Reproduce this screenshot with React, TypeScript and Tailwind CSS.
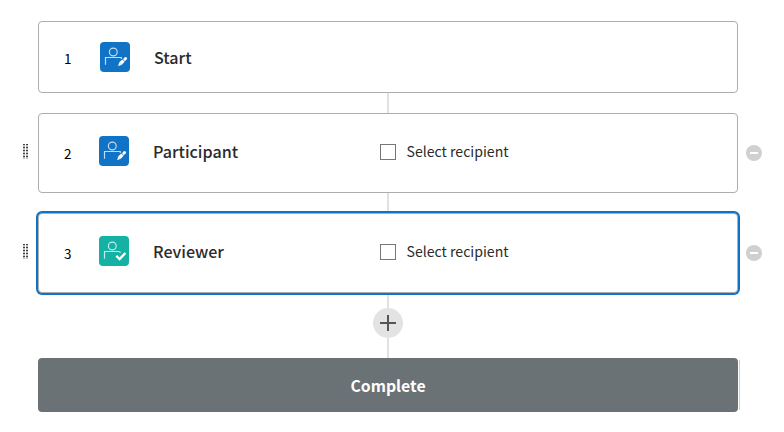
import React from "react";

type Kind = "participant" | "reviewer";

function RoleIcon({ kind }: { kind: Kind }) {
  return (
    <svg
      viewBox="0 0 30 30"
      className={`size-[30px] shrink-0 rounded ${kind === "reviewer" ? "bg-[#14b1a5]" : "bg-[#1073c6]"}`}
      fill="none"
    >
      <g stroke="#fff" strokeOpacity="0.75" strokeWidth="1.2">
        <circle cx="13.3" cy="10" r="3.9" />
        {kind === "reviewer" ? (
          <path d="M5.5 22.7v-7.2h14.2q1.6 0 1.6 1.6" />
        ) : (
          <path d="M5.5 22.7v-7.2h15.8v1.5" />
        )}
      </g>
      {kind === "reviewer" ? (
        <path d="M17.3 19.8l3.3 3.2 5.8-6" stroke="#fff" strokeWidth="2.3" />
      ) : (
        <>
          <path d="M20.3 21.8l3.2-3.2" stroke="#fff" strokeWidth="3.4" />
          <path d="M24.8 17.3l.8-.8" stroke="#fff" strokeWidth="3" strokeLinecap="round" />
          <path d="M19.2 20.6l2.3 2.3-3.4 1z" fill="#fff" />
        </>
      )}
    </svg>
  );
}

function Grip() {
  return (
    <div className="grid w-[5px] shrink-0 grid-cols-2 gap-x-px">
      {Array.from({ length: 10 }, (_, i) => (
        <span key={i} className="h-[3px] w-0.5 border-t border-[#444] bg-[#c0c0c0]" />
      ))}
    </div>
  );
}

function RemoveButton() {
  return (
    <button className="flex size-4 shrink-0 items-center justify-center rounded-full bg-[#d0d0d0]" aria-label="Remove">
      <span className="h-0.5 w-2 bg-white" />
    </button>
  );
}

function Connector() {
  return <div className="ml-[387px] h-5 w-0.5 bg-[#e1e1e1]" />;
}

function Step({ number, name, kind, selected = false }: { number: number; name: string; kind: Kind; selected?: boolean }) {
  return (
    <div className="flex h-20 items-center pl-[23px]">
      <div className="pb-[3px]">
        <Grip />
      </div>
      <div
        className={`mr-2 ml-[10px] flex h-20 w-[700px] items-center rounded border border-[#adadad] bg-white pb-1 pl-[25px] ${
          selected ? "ring-2 ring-[#1073c6]" : ""
        }`}
      >
        <span className="w-[35px] pt-[3px] text-[13.5px] leading-5 text-black">{number}</span>
        <RoleIcon kind={kind} />
        <span className="ml-6 w-[227px] pb-px text-[16.1px] leading-6 font-medium text-[#2b2b2b]">{name}</span>
        <label className="flex items-center pt-0.5">
          <span className="size-4 border border-[#767676] bg-white" />
          <span className="ml-[10.5px] pb-0.5 text-[14.1px] leading-5 text-[#2b2b2b]">Select recipient</span>
        </label>
      </div>
      <RemoveButton />
    </div>
  );
}

export default function App() {
  return (
    <main className="h-[432px] w-[784px] overflow-hidden bg-white pt-[21px] font-['Noto_Sans_CJK_SC',sans-serif]">
      <div className="ml-[38px] flex h-[72px] w-[700px] items-center rounded border border-[#adadad] pl-[25px]">
        <span className="w-9 pt-px text-[13.5px] leading-5 text-black">1</span>
        <RoleIcon kind="participant" />
        <span className="ml-6 text-[16.1px] leading-6 font-medium text-[#2b2b2b]">Start</span>
      </div>
      <Connector />
      <Step number={2} name="Participant" kind="participant" />
      <Connector />
      <Step number={3} name="Reviewer" kind="reviewer" selected />
      <div className="ml-[373px] flex h-[65px] w-[30px] flex-col items-center pt-0.5">
        <div className="h-[13px] w-0.5 bg-[#e1e1e1]" />
        <button className="flex size-[30px] items-center justify-center rounded-full bg-[#e3e3e3]" aria-label="Add step">
          <svg viewBox="0 0 16 16" className="size-4">
            <path d="M8 0v16M0 8h16" stroke="#555" strokeWidth="2" />
          </svg>
        </button>
        <div className="h-5 w-0.5 bg-[#e1e1e1]" />
      </div>
      <div className="ml-[38px] flex items-center">
        <div className="flex h-[54px] w-[700px] items-center justify-center rounded bg-[#6a7275] pt-0.5 text-[15.8px] font-bold text-white">
          Complete
        </div>
        <div className="ml-px h-[50px] w-px bg-[#d2cccc]" />
      </div>
    </main>
  );
}
